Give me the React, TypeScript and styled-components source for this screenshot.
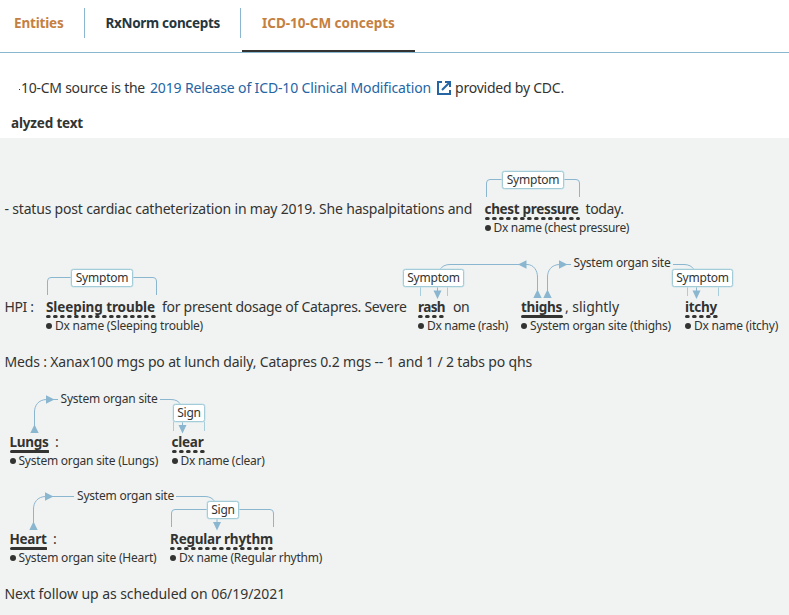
import React from 'react';
import styled, { createGlobalStyle } from 'styled-components';

const ink = '#333431';
const wire = '#8ab6d0';
const orange = '#c5803f';

const GlobalStyle = createGlobalStyle`
  * { box-sizing: border-box; }
  body {
    margin: 0;
    background: #fff;
    color: ${ink};
    font: 14px/20px "Noto Sans", "Open Sans", sans-serif;
    overflow: hidden;
  }
`;

const Page = styled.div`
  display: flex;
  flex-direction: column;
  width: 789px;
  height: 615px;
  overflow: hidden;
`;

const Tabs = styled.nav`
  display: flex;
  height: 53px;
  border-bottom: 1px solid ${wire};
`;

const Tab = styled.div<{ $width: number; $pad: number; $ls: number; $accent?: boolean; $active?: boolean }>`
  display: flex;
  flex: none;
  width: ${p => p.$width}px;
  height: 52px;
  padding: 13px 0 0 ${p => p.$pad}px;
  border-bottom: 2px solid ${p => (p.$active ? ink : 'transparent')};
  color: ${p => (p.$accent ? orange : '#263640')};
  font-size: 13.5px;
  font-weight: 700;
  letter-spacing: ${p => p.$ls}px;
  white-space: nowrap;
`;

const Divider = styled.div`
  flex: none;
  width: 1px;
  height: 30px;
  margin-top: 8px;
  background: ${wire};
`;

const Source = styled.p`
  display: flex;
  align-items: center;
  height: 20px;
  margin: 25px 0 0 19px;
  white-space: nowrap;
`;

const Speck = styled.span`
  width: 1px;
  height: 1px;
  margin: 2px 1px 0 0;
  background: ${ink};
`;

const Run = styled.span<{ $gap?: number; $width?: number; $ls?: number }>`
  flex: none;
  width: ${p => (p.$width ? `${p.$width}px` : 'auto')};
  margin-left: ${p => p.$gap ?? 0}px;
  letter-spacing: ${p => p.$ls ?? 0}px;
  white-space: pre;
`;

const SourceLink = styled.a`
  display: flex;
  align-items: center;
  width: 301px;
  margin-left: 5px;
  color: #2565a3;
`;

const LinkIcon = styled.svg`
  flex: none;
  margin-left: 6px;
`;

const Heading = styled.h2`
  height: 20px;
  margin: 15px 0 0 11px;
  font-size: 13.5px;
  line-height: 20px;
  font-weight: 700;
  letter-spacing: -0.17px;
`;

const Panel = styled.main`
  flex: 1;
  margin-top: 5px;
  padding-top: 1px;
  background: #f1f3f3;
`;

const PlainLine = styled.div`
  display: flex;
  height: 20px;
  margin-top: 18px;
  padding-left: 4.5px;
`;

const AnnotatedLine = styled.div<{ $indent?: number; $after?: number }>`
  position: relative;
  display: flex;
  height: 97px;
  margin-bottom: ${p => p.$after ?? 0}px;
  padding: 60px 0 0 ${p => p.$indent ?? 4.5}px;
`;

const EntityBox = styled.span<{ $gap: number; $width: number }>`
  display: flex;
  flex: none;
  flex-direction: column;
  width: ${p => p.$width}px;
  margin-left: ${p => p.$gap}px;
`;

const Word = styled.b<{ $ls: number }>`
  height: 18px;
  font-size: 13.5px;
  letter-spacing: ${p => p.$ls}px;
  white-space: nowrap;
`;

const Underline = styled.svg`
  display: block;
  width: 100%;
  height: 3px;
  flex: none;
`;

const Caption = styled.span<{ $ls: number }>`
  display: flex;
  align-items: center;
  height: 14px;
  margin-top: 1px;
  font-size: 12px;
  line-height: 14px;
  letter-spacing: ${p => p.$ls}px;
  white-space: nowrap;

  &::before {
    content: '';
    flex: none;
    width: 6px;
    height: 6px;
    margin-right: 3px;
    border-radius: 50%;
    background: ${ink};
  }
`;

const Wires = styled.svg`
  position: absolute;
  inset: 0;
  overflow: visible;
  fill: none;
  stroke: ${wire};
  stroke-width: 1;
`;

const Badge = styled.span<{ $x: number; $width: number }>`
  position: absolute;
  top: 32px;
  left: ${p => p.$x}px;
  display: flex;
  justify-content: center;
  width: ${p => p.$width}px;
  height: 18px;
  border: 1px solid #a3cbd8;
  border-radius: 2.5px;
  background: #fff;
  box-shadow: 0 0 0 0.5px #c5e1e6;
  font-size: 12px;
  line-height: 16px;
  letter-spacing: -0.2px;
`;

const Relation = styled.span<{ $x: number; $y: number }>`
  position: absolute;
  top: ${p => p.$y}px;
  left: ${p => p.$x}px;
  font-size: 12px;
  line-height: 14px;
  letter-spacing: -0.211px;
  white-space: nowrap;
`;

type EntityProps = {
  word: string;
  caption: string;
  gap: number;
  width: number;
  ls: number;
  captionLs: number;
  solid?: boolean;
};

function Entity({ word, caption, gap, width, ls, captionLs, solid }: EntityProps) {
  return (
    <EntityBox $gap={gap} $width={width}>
      <Word $ls={ls}>{word}</Word>
      <Underline>
        <line
          x1="1.5" y1="1.5" x2={width - 1.5} y2="1.5"
          stroke={ink} strokeWidth="3" strokeLinecap="round"
          strokeDasharray={solid ? undefined : '1.7 5.3'}
        />
      </Underline>
      <Caption $ls={captionLs}>{caption}</Caption>
    </EntityBox>
  );
}

type Point = { x: number; y: number };
const Up = ({ x, y }: Point) => <path fill={wire} stroke="none" d={`M${x} ${y}l4.2 8.5h-8.4z`} />;
const Down = ({ x, y }: Point) => <path fill={wire} stroke="none" d={`M${x} ${y}l-4 -8.5h8z`} />;
const Right = ({ x, y }: Point) => <path fill={wire} stroke="none" d={`M${x} ${y}l-8.5 -4.2v8.4z`} />;
const Left = ({ x, y }: Point) => <path fill={wire} stroke="none" d={`M${x} ${y}l8.5 -4.2v8.4z`} />;

const Bracket = ({ from, to }: { from: number; to: number }) => (
  <path d={`M${from} 58V44q0 -3.5 3.5 -3.5H${to - 3.5}q3.5 0 3.5 3.5V58`} />
);

export default function App() {
  return (
    <>
      <GlobalStyle />
      <Page>
        <Tabs>
          <Tab $width={84} $pad={14} $ls={-0.18} $accent>Entities</Tab>
          <Divider />
          <Tab $width={155} $pad={20.5} $ls={-0.31}>RxNorm concepts</Tab>
          <Divider />
          <Run $width={1} />
          <Tab $width={173} $pad={20} $ls={-0.02} $accent $active>ICD-10-CM concepts</Tab>
        </Tabs>
        <Source>
          <Speck />
          <Run $width={124} $ls={-0.256}>10-CM source is the</Run>
          <SourceLink>
            <Run $width={281} $ls={-0.139}>2019 Release of ICD-10 Clinical Modification</Run>
            <LinkIcon width="14" height="14" viewBox="0 0 14 14" fill="none" stroke="#2565a3" strokeWidth="2">
              <path d="M5 1H1v12h12V9" />
              <path d="M8 1h5v5M13 1L5 9" />
            </LinkIcon>
          </SourceLink>
          <Run $gap={4} $ls={-0.222}>provided by CDC.</Run>
        </Source>
        <Heading>alyzed text</Heading>
        <Panel>
          <AnnotatedLine $after={1}>
            <Run $width={467.5} $ls={-0.19}>- status post cardiac catheterization in may 2019. She haspalpitations and</Run>
            <Entity word="chest pressure" caption="Dx name (chest pressure)" gap={12.5} width={95} ls={-0.32} captionLs={-0.31} />
            <Run $gap={6} $ls={-0.387}>today.</Run>
            <Wires width="789" height="97"><Bracket from={486.5} to={579.5} /></Wires>
            <Badge $x={502} $width={62}>Symptom</Badge>
          </AnnotatedLine>

          <AnnotatedLine>
            <Run $width={41.5} $ls={-0.396}>HPI :</Run>
            <Entity word="Sleeping trouble" caption="Dx name (Sleeping trouble)" gap={0} width={110} ls={-0.09} captionLs={-0.203} />
            <Run $gap={6} $width={256} $ls={-0.271}>for present dosage of Catapres. Severe</Run>
            <Entity word="rash" caption="Dx name (rash)" gap={0} width={27} ls={-0.6} captionLs={-0.307} />
            <Run $gap={8} $width={68} $ls={-0.561}>on</Run>
            <Entity word="thighs" caption="System organ site (thighs)" gap={0} width={42} ls={-0.28} captionLs={-0.204} solid />
            <Run $gap={2} $width={120} $ls={-0.039}>, slightly</Run>
            <Entity word="itchy" caption="Dx name (itchy)" gap={0} width={33} ls={-0.27} captionLs={-0.227} />
            <Wires width="789" height="97">
              <Bracket from={47.5} to={156.5} />
              <path d="M420.5 49v10M447.5 49v10M687.5 49v10M718.5 49v10" stroke="#a9cedb" />
              <path d="M437.5 49v6M696.5 49v6" />
              <path d="M439.5 33Q443 27.5 450 27.5H527C534 27.5 537.5 34 537.5 40V55" />
              <path d="M547.5 55V40C547.5 34 551 27.5 560 27.5H571M673 27.5H684Q691 27.5 694.5 33" />
              <Down x={437.5} y={62} /><Down x={696.5} y={62} />
              <Left x={518} y={27.5} /><Right x={567.5} y={27.5} />
              <Up x={537.5} y={52.5} /><Up x={547.5} y={52.5} />
            </Wires>
            <Badge $x={71} $width={62}>Symptom</Badge>
            <Badge $x={403} $width={61}>Symptom</Badge>
            <Badge $x={672} $width={61}>Symptom</Badge>
            <Relation $x={573.5} $y={19}>System organ site</Relation>
          </AnnotatedLine>

          <PlainLine>
            <Run $ls={-0.16}>Meds : Xanax100 mgs po at lunch daily, Catapres 0.2 mgs -- 1 and 1 / 2 tabs po qhs</Run>
          </PlainLine>

          <AnnotatedLine $indent={9.5}>
            <Entity word="Lungs" caption="System organ site (Lungs)" gap={0} width={39.5} ls={-0.28} captionLs={-0.226} solid />
            <Run $gap={6} $width={116.5}>:</Run>
            <Entity word="clear" caption="Dx name (clear)" gap={0} width={33} ls={-0.23} captionLs={-0.266} />
            <Wires width="789" height="97">
              <path d="M34.5 55V40C34.5 34 38 27.5 47 27.5H58M160 27.5H171Q178 27.5 181 33M182.5 49v6" />
              <path d="M173.5 48v11M204.5 48v11" stroke="#a9cedb" />
              <Up x={34.5} y={52.5} /><Right x={54.5} y={27.5} /><Down x={182.5} y={61.5} />
            </Wires>
            <Badge $x={173} $width={32}>Sign</Badge>
            <Relation $x={60.5} $y={20}>System organ site</Relation>
          </AnnotatedLine>

          <AnnotatedLine $indent={9.5}>
            <Entity word="Heart" caption="System organ site (Heart)" gap={0} width={37.5} ls={-0.28} captionLs={-0.183} solid />
            <Run $gap={6} $width={117}>:</Run>
            <Entity word="Regular rhythm" caption="Dx name (Regular rhythm)" gap={0} width={103} ls={-0.23} captionLs={-0.253} />
            <Wires width="789" height="97">
              <Bracket from={171.5} to={273.5} />
              <path d="M33.5 55V40C33.5 34 37 27.5 46 27.5H74M176 27.5H205Q212 27.5 215 33M217 49v6" />
              <Up x={33.5} y={52.5} /><Right x={53.5} y={27.5} /><Down x={217} y={61.5} />
            </Wires>
            <Badge $x={207} $width={32}>Sign</Badge>
            <Relation $x={77} $y={20}>System organ site</Relation>
          </AnnotatedLine>

          <PlainLine>
            <Run $ls={-0.06}>Next follow up as scheduled on 06/19/2021</Run>
          </PlainLine>
        </Panel>
      </Page>
    </>
  );
}
